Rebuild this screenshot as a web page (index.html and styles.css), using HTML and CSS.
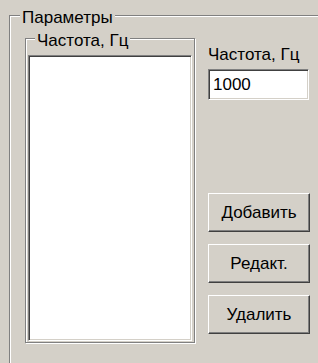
FILE: index.html
```html
<!DOCTYPE html>
<html lang="ru">
<head>
  <meta charset="UTF-8" />
  <meta name="viewport" content="width=device-width, initial-scale=1.0" />
  <title>Параметры</title>
  <link rel="stylesheet" href="styles.css">
</head>
<body>
  <div class="group outer">
    <span class="group-title">Параметры</span>
    <div class="group inner">
      <span class="group-title">Частота, Гц</span>
      <div class="listbox"></div>
    </div>
    <div class="side">
      <label class="field-label" for="freq">Частота, Гц</label>
      <input id="freq" class="edit" type="text" value="1000" />
      <div class="buttons">
        <button class="btn">Добавить</button>
        <button class="btn">Редакт.</button>
        <button class="btn">Удалить</button>
      </div>
    </div>
  </div>
</body>
</html>
```

FILE: styles.css
```css
:root {
  --face: #d4d0c8;
  --shadow: #808080;
  --dark: #404040;
  --light: #ffffff;
}

* {
  box-sizing: border-box;
}

html, body {
  margin: 0;
  height: 100%;
  overflow: hidden;
  background: var(--face);
  font-family: "Liberation Sans", Arial, sans-serif;
  font-size: 17px;
  color: #000;
}

.group {
  position: relative;
  border: 1px solid var(--shadow);
  box-shadow: inset 1px 1px 0 var(--light), 1px 1px 0 var(--light);
}

.group-title {
  position: absolute;
  top: -8px;
  padding: 0 2px;
  line-height: 19px;
  background: var(--face);
  white-space: nowrap;
}

/* the outer frame goes on past the window, so only its top and left edges show */
.outer {
  display: flex;
  align-items: flex-start;
  margin: 15px 0 0 9px;
  width: 309px;
  height: 348px;
  padding: 22px 0 0 15px;
  border-right: none;
  border-bottom: none;
  box-shadow: inset 1px 1px 0 var(--light);
}

.outer > .group-title {
  left: 10px;
}

.inner {
  display: flex;
  flex-direction: column;
  width: 170px;
  height: 305px;
  padding: 16px 2px 1px 2px;
}

.inner > .group-title {
  left: 9px;
}

.listbox {
  flex: 1;
  background: #fff;
  border: 1px solid;
  border-color: var(--shadow) var(--light) var(--light) var(--shadow);
  box-shadow: inset 1px 1px 0 var(--dark), inset -1px -1px 0 var(--face);
}

.side {
  display: flex;
  flex-direction: column;
  margin-left: 13px;
  width: 102px;
}

.field-label {
  margin-top: 7px;
  line-height: 19px;
}

.edit {
  margin-top: 5px;
  width: 101px;
  height: 31px;
  padding: 0 0 0 4px;
  font: inherit;
  background: #fff;
  border: 1px solid;
  border-color: var(--shadow) var(--light) var(--light) var(--shadow);
  box-shadow: inset 1px 1px 0 var(--dark), inset -1px -1px 0 var(--face);
  outline: none;
}

.buttons {
  display: flex;
  flex-direction: column;
  gap: 12px;
  margin-top: 93px;
}

.btn {
  width: 102px;
  height: 39px;
  padding: 0;
  font: inherit;
  color: #000;
  background: var(--face);
  border: 1px solid;
  border-color: var(--light) var(--dark) var(--dark) var(--light);
  box-shadow: inset -1px -1px 0 var(--shadow);
}
```
